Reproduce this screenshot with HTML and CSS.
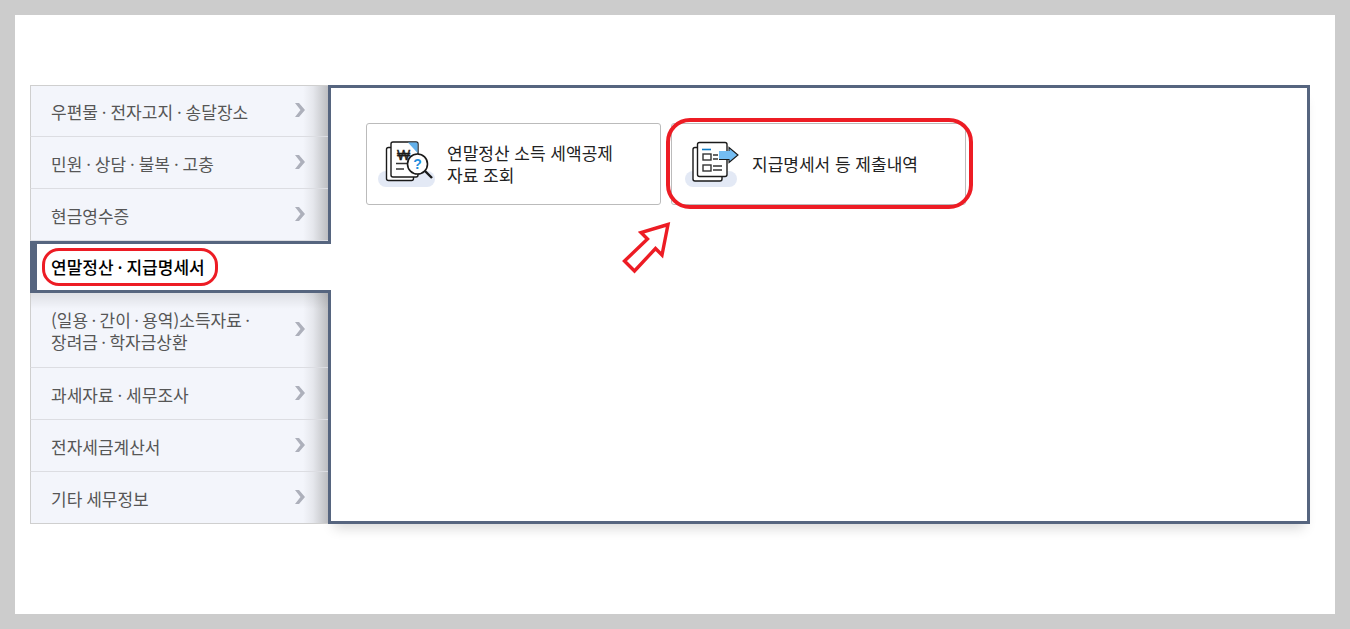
FILE: index.html
```html
<!DOCTYPE html>
<html lang="ko">
<head>
<meta charset="utf-8">
<title>연말정산 · 지급명세서</title>
<link rel="stylesheet" href="styles.css">
</head>
<body>
<div class="frame">
  <nav class="nav">
    <a class="item"><span>우편물 · 전자고지 · 송달장소</span><svg class="chev" viewBox="0 0 10 14"><path d="M0 0H4L10 7 4 14H0L5.500 7Z"/></svg></a>
    <a class="item"><span>민원 · 상담 · 불복 · 고충</span><svg class="chev" viewBox="0 0 10 14"><path d="M0 0H4L10 7 4 14H0L5.500 7Z"/></svg></a>
    <a class="item"><span>현금영수증</span><svg class="chev" viewBox="0 0 10 14"><path d="M0 0H4L10 7 4 14H0L5.500 7Z"/></svg></a>
    <a class="item active"><span>연말정산 · 지급명세서</span></a>
    <a class="item tall after-active"><span>(일용 · 간이 · 용역)소득자료 ·<br>장려금 · 학자금상환</span><svg class="chev" viewBox="0 0 10 14"><path d="M0 0H4L10 7 4 14H0L5.500 7Z"/></svg></a>
    <a class="item"><span>과세자료 · 세무조사</span><svg class="chev" viewBox="0 0 10 14"><path d="M0 0H4L10 7 4 14H0L5.500 7Z"/></svg></a>
    <a class="item"><span>전자세금계산서</span><svg class="chev" viewBox="0 0 10 14"><path d="M0 0H4L10 7 4 14H0L5.500 7Z"/></svg></a>
    <a class="item"><span>기타 세무정보</span><svg class="chev" viewBox="0 0 10 14"><path d="M0 0H4L10 7 4 14H0L5.500 7Z"/></svg></a>
  </nav>
  <main class="panel">
    <div class="cards">
      <a class="card">
        <svg class="icon" viewBox="0 0 60 54">
          <rect class="pill" x="1" y="34" width="57" height="16" rx="8"/>
          <rect class="doc" x="9.500" y="10.500" width="27" height="33" rx="2"/>
          <rect class="doc" x="14" y="5" width="27" height="35" rx="2"/>
          <path class="blue" d="M31 5.500H39.500Q40.500 5.500 40.500 6.500V16Z"/>
          <text class="won" x="26.500" y="23">₩</text>
          <path class="line" d="M19 26.500H30M19 32H27"/>
          <circle class="lens" cx="40.500" cy="27" r="10"/>
          <path class="handle" d="M48 34L55 41"/>
          <text class="q" x="40.500" y="32">?</text>
        </svg>
        <span>연말정산 소득 세액공제<br>자료 조회</span>
      </a>
      <a class="card marked">
        <svg class="icon" viewBox="0 0 60 54">
          <rect class="pill" x="3" y="34" width="52" height="16" rx="8"/>
          <rect class="doc" x="11" y="10.500" width="29" height="33.500" rx="2"/>
          <rect class="doc" x="15.500" y="5.500" width="29.500" height="34" rx="2"/>
          <path class="dash" d="M20 12.500H29"/>
          <rect class="box" x="21" y="17" width="8" height="6"/>
          <rect class="box" x="21" y="28" width="8" height="6"/>
          <path class="line" d="M31 18H36M31 22H36M31 29H40M31 33H40"/>
          <path class="arrow" d="M37 14H47V10.500L56 18 47 25.500V22.500H37Z"/>
          <path class="arrow-edge" d="M37 22.500H47V25.500L56 18 47 10.500V14"/>
        </svg>
        <span>지급명세서 등 제출내역</span>
      </a>
    </div>
    <svg class="pointer" viewBox="0 0 52 56"><path d="M47 4.500L20 12.500 26.500 19 3.500 41 13.500 51 34.500 28.500 41 35Z"/></svg>
  </main>
</div>
</body>
</html>
```
FILE: styles.css
```css
*, *::before, *::after { box-sizing: border-box; }
html, body { margin: 0; height: 629px; overflow: hidden; }
body {
  background: #cccccc;
  padding: 15px;
  font-family: "Noto Sans CJK KR", "Noto Sans", sans-serif;
}
.frame {
  display: flex;
  height: 599px;
  padding: 70px 25px 0 15px;
  background: #fff;
  align-items: flex-start;
}
.nav {
  display: flex;
  flex-direction: column;
  flex: 0 0 298px;
  position: relative;
  z-index: 2;
}
.item {
  display: flex;
  align-items: center;
  justify-content: space-between;
  height: 52px;
  padding: 3px 23px 0 20px;
  border-left: 1px solid #cfcfcf;
  border-bottom: 1px solid #dcdde2;
  background: linear-gradient(90deg, rgba(130,130,130,0) 272px, rgba(130,130,130,.12) 282px, rgba(130,130,130,.5) 298px), #f3f5fb;
  color: #565656;
  font-size: 17px;
  word-spacing: -0.85px;
  line-height: 22px;
}
.item:first-child { border-top: 1px solid #cfcfcf; padding-top: 1px; }
.item:last-child { border-bottom-color: #cfcfcf; }
.tall { height: 75px; padding-top: 2px; word-spacing: -1.4px; }
.after-active {
  background: linear-gradient(180deg, rgba(0,0,0,.09), rgba(0,0,0,0) 16px), linear-gradient(90deg, rgba(130,130,130,0) 272px, rgba(130,130,130,.12) 282px, rgba(130,130,130,.5) 298px), #f3f5fb;
}
.chev { width: 10px; height: 14px; margin-top: -5px; fill: #adb0bb; flex: none; }
.tall .chev { margin-top: -4px; }
.item:first-child .chev { margin-top: -3px; }
.active {
  position: relative;
  margin-right: -3px;
  padding: 0 0 0 14px;
  border: 0 solid #56657f;
  border-width: 3px 0 3px 7px;
  background: #fff;
  color: #000;
  font-weight: 500;
}
.active span::after {
  content: "";
  position: absolute;
  left: 5px;
  top: 4px;
  width: 176px;
  height: 38px;
  border: 3.5px solid #ed1c24;
  border-radius: 17px;
}
.panel {
  position: relative;
  z-index: 1;
  flex: 0 0 982px;
  height: 439px;
  padding: 35px;
  border: 3px solid #56657f;
  background: #fff;
  box-shadow: 0 10px 12px -6px rgba(0,0,0,.16);
}
.cards { display: flex; gap: 10px; }
.card {
  position: relative;
  display: flex;
  align-items: center;
  gap: 10px;
  width: 295px;
  height: 82px;
  padding-left: 10px;
  border: 1px solid #bbbbbb;
  border-radius: 3px;
  color: #222;
  font-size: 17px;
  line-height: 22px;
}
.marked::after {
  content: "";
  position: absolute;
  left: -6px;
  top: -6px;
  right: -8px;
  bottom: -5px;
  border: 4px solid #ed1c24;
  border-radius: 24px;
}
.icon { width: 60px; height: 54px; flex: none; }
.pill { fill: #e3e9f5; }
.doc { fill: #fff; stroke: #1a1a1a; stroke-width: 1.4; }
.blue { fill: #62b0ea; }
.won { font-family: "Liberation Sans", sans-serif; font-size: 14px; font-weight: 400; text-anchor: middle; fill: #1a1a1a; stroke: #1a1a1a; stroke-width: .4; }
.line { fill: none; stroke: #333; stroke-width: 1.3; }
.lens { fill: #fff; stroke: #1a1a1a; stroke-width: 1.6; }
.handle { stroke: #1a1a1a; stroke-width: 2.4; }
.q { font-family: "Liberation Sans", sans-serif; font-size: 14px; font-weight: 700; text-anchor: middle; fill: #1f8fde; }
.dash { stroke: #0b79c4; stroke-width: 1.6; }
.box { fill: #fff; stroke: #333; stroke-width: 1.4; }
.arrow { fill: #74bdf2; }
.arrow-edge { fill: none; stroke: #1a1a1a; stroke-width: 1.1; }
.pointer {
  position: absolute;
  left: 290px;
  top: 132px;
  width: 52px;
  height: 56px;
  fill: #fff;
  stroke: #ed1c24;
  stroke-width: 3.4;
}
```
